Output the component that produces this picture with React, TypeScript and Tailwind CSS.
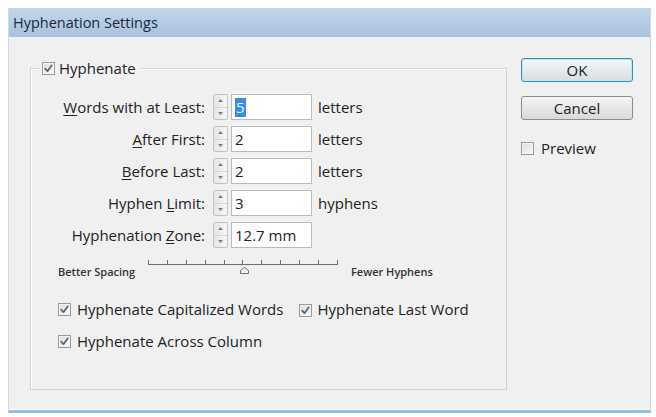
import React from 'react'

const font = { fontFamily: '"Open Sans", "Noto Sans", "Liberation Sans", sans-serif' }

function Check({ checked = true }: { checked?: boolean }) {
  return (
    <span className="inline-flex w-[13px] h-[13px] shrink-0 items-center justify-center border border-[#9a9a9a] bg-gradient-to-br from-[#dcdcdc] to-[#fbfbfb] shadow-[inset_0_0_0_1px_#f4f4f4]">
      {checked && (
        <svg width="9" height="9" viewBox="0 0 9 9">
          <path d="M1.2 4.6 L3.5 7.2 L7.8 1.3" fill="none" stroke="#4a5f78" strokeWidth="1.6" strokeLinecap="round" strokeLinejoin="round" />
        </svg>
      )}
    </span>
  )
}

function Spinner() {
  return (
    <div className="w-[15px] h-[26px] flex flex-col border border-[#c2c2c2] rounded-[2px] bg-gradient-to-r from-[#e6e6e6] to-[#f7f7f7]">
      <div className="flex-1 flex items-center justify-center border-b border-[#d4d4d4]">
        <svg width="5" height="3" viewBox="0 0 5 3"><path d="M0 3 L2.5 0 L5 3 Z" fill="#7d7d7d" /></svg>
      </div>
      <div className="flex-1 flex items-center justify-center">
        <svg width="5" height="3" viewBox="0 0 5 3"><path d="M0 0 L2.5 3 L5 0 Z" fill="#7d7d7d" /></svg>
      </div>
    </div>
  )
}

function Row({ label, u, value, unit, selected }: { label: string; u: number; value: string; unit?: string; selected?: boolean }) {
  return (
    <div className="flex items-center h-[26px]">
      <div className="w-[175px] text-right pr-[1px] whitespace-nowrap">
        {label.slice(0, u)}
        <span className="underline underline-offset-2">{label[u]}</span>
        {label.slice(u + 1)}
      </div>
      <div className="ml-[7px]"><Spinner /></div>
      <div className="ml-[3px] w-[81px] h-[26px] bg-white border border-[#b8bcc2] flex items-center pl-[3px]">
        {selected ? <span className="bg-[#3b8de0] text-[#e8f2ff] px-[1px] leading-[19px]">{value}</span> : <span>{value}</span>}
      </div>
      {unit && <div className="ml-[6px]">{unit}</div>}
    </div>
  )
}

export default function App() {
  const ticks = Array.from({ length: 11 }, (_, i) => i)
  return (
    <div className="w-[656px] h-[417px] bg-white pt-[8px] pl-[8px] text-[15px] leading-[20px] text-[#222]" style={font}>
      <div className="w-[643px] h-[405px] flex flex-col border-l border-r border-[#c9dbea] border-b-[3px] border-b-[#8fc3df]">
        <div className="h-[29px] bg-gradient-to-b from-[#c3d6ec] to-[#a8c1de] flex items-center pl-[4px] text-[14.5px] text-[#1b2837]">
          Hyphenation Settings
        </div>
        <div className="flex-1 bg-[#f0f0f0] flex items-start pl-[21px] border-b border-[#f8fbfd]">
          <div className="relative mt-[31px] w-[477px] h-[322px] border border-[#d3d3d3] shadow-[inset_1px_1px_0_#ffffff]">
            <div className="absolute -top-[11px] left-[8px] flex items-center gap-[4px] bg-[#f0f0f0] pl-[3px] pr-[4px]">
              <Check />
              <span>Hyphenate</span>
            </div>
            <div className="pt-[25px] flex flex-col gap-[6px]">
              <Row label="Words with at Least:" u={0} value="5" unit="letters" selected />
              <Row label="After First:" u={0} value="2" unit="letters" />
              <Row label="Before Last:" u={0} value="2" unit="letters" />
              <Row label="Hyphen Limit:" u={7} value="3" unit="hyphens" />
              <Row label="Hyphenation Zone:" u={12} value="12.7 mm" />
            </div>
            <div className="flex items-center mt-[9px] pl-[27px] text-[11px] leading-[14px] font-semibold text-[#333]">
              <span className="mt-[8px] w-[90px]">Better Spacing</span>
              <div className="relative w-[190px] h-[20px]">
                <div className="absolute left-0 right-0 top-[6px] border-t border-[#6f6f6f]" />
                <div className="absolute left-0 right-0 top-[2px] flex justify-between">
                  {ticks.map((t) => (
                    <span key={t} className={`w-px bg-[#6f6f6f] ${t === 5 ? 'h-[5px]' : 'h-[4px]'}`} />
                  ))}
                </div>
                <svg className="absolute left-[92px] top-[9px]" width="9" height="7" viewBox="0 0 9 7">
                  <path d="M0.5 6.5 L0.5 3.5 L4.5 0.5 L8.5 3.5 L8.5 6.5 Z" fill="#f4f4f4" stroke="#6d6d6d" />
                </svg>
              </div>
              <span className="mt-[8px] ml-[13px]">Fewer Hyphens</span>
            </div>
            <div className="flex flex-col gap-[12px] mt-[20px] pl-[27px]">
              <div className="flex items-center">
                <Check />
                <span className="ml-[6px]">Hyphenate Capitalized Words</span>
                <span className="ml-[16px]"><Check /></span>
                <span className="ml-[5px]">Hyphenate Last Word</span>
              </div>
              <div className="flex items-center">
                <Check />
                <span className="ml-[6px]">Hyphenate Across Column</span>
              </div>
            </div>
          </div>
          <div className="ml-[14px] mt-[21px] flex flex-col">
            <button className="w-[112px] h-[24px] rounded-[3px] border border-[#3c8fa8] bg-gradient-to-b from-[#f4f9fb] to-[#d7dde2] shadow-[inset_0_0_0_1px_#bfe6f3]">OK</button>
            <button className="mt-[14px] w-[112px] h-[24px] rounded-[3px] border border-[#8c8c8c] bg-gradient-to-b from-[#f5f5f5] to-[#d9d9d9]">Cancel</button>
            <div className="mt-[18px] flex items-center">
              <Check checked={false} />
              <span className="ml-[7px]">Preview</span>
            </div>
          </div>
        </div>
      </div>
    </div>
  )
}
